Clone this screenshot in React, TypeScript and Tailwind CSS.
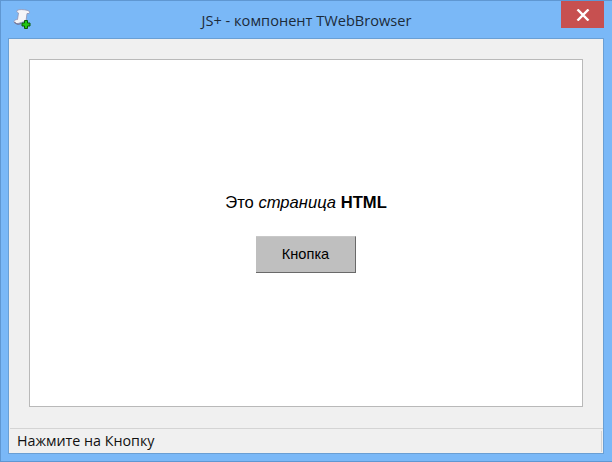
const App = () => {
  return (
    <div className="w-[612px] h-[462px] flex flex-col bg-[#7ab8f7] border-t border-l border-b border-[#5f97d2] font-['Liberation_Sans',sans-serif] overflow-hidden relative">
      {/* Title bar */}
      <div className="h-[37px] shrink-0 relative">
        <svg className="absolute left-[11px] top-[7px]" width="20" height="21" viewBox="0 0 20 21">
          <path d="M5 2.5C7 1 12 1.5 16 2.5C17.5 3 18 4.5 17 5.5L15 5.5L14 13L6 15.5C4 16 2 15 2 13.5C2.5 12 4 11.5 5.5 11.5L6.5 5C5 4.5 4.5 3.5 5 2.5Z" fill="#f4f4f8" stroke="#8f90b0" strokeWidth="0.8" />
          <path d="M2.5 14C4 16.5 7 16.5 9 15.5" fill="none" stroke="#6f7090" strokeWidth="1.2" />
          <path d="M12.5 12.5h3v2.5h2.5v3h-2.5v2.5h-3v-2.5h-2.5v-3h2.5z" fill="#22c814" stroke="#0a5a08" strokeWidth="1" />
        </svg>
        <div className="text-center text-[14.6px] leading-[20px] text-[#1c2b3a] pt-[9px] font-['Open_Sans',sans-serif]">JS+ - компонент TWebBrowser</div>
        <div className="absolute left-[560px] top-0 w-[43px] h-[27px] bg-[#c75050] flex items-center justify-center">
          <svg width="14" height="12" viewBox="0 0 14 12">
            <path d="M1.5 0.5L12.5 11.5M12.5 0.5L1.5 11.5" stroke="#fff" strokeWidth="2.4" />
          </svg>
        </div>
      </div>
      {/* Client area */}
      <div className="flex-1 ml-[7px] mr-[8px] mb-[7px] bg-[#f0f0f0] border border-[#6a9fd4] flex flex-col min-h-0">
        <div className="flex-1 pt-[20px] px-[20px] pb-[21px] flex min-h-0">
          <div className="flex-1 bg-white border border-[#b9b9b9] flex flex-col items-center pt-[134px]">
            <p className="text-[16.6px] leading-[18px] text-black">
              Это <i>страница</i> <b>HTML</b>
            </p>
            <button className="mt-[24px] w-[100px] h-[37px] bg-[#bfbfbf] border-t border-[#c8c8c8] border-r border-r-[#696969] border-b border-b-[#696969] text-[14.6px] text-black">
              Кнопка
            </button>
          </div>
        </div>
        {/* Status bar */}
        <div className="h-[25px] shrink-0 ml-px border-t border-[#d4d4d4] flex items-center justify-between pl-[7px] pr-[1px] text-[14.3px] text-[#111] font-['Open_Sans',sans-serif]">
          <span>Нажмите на Кнопку</span>
          <div className="w-px h-[21px] bg-[#d4d4d4]" />
        </div>
      </div>
    </div>
  );
};

export default App;
